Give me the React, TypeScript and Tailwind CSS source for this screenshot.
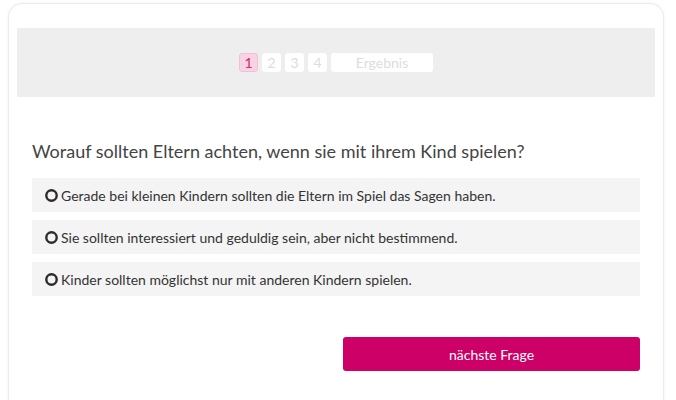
import React from "react";

const options = [
  "Gerade bei kleinen Kindern sollten die Eltern im Spiel das Sagen haben.",
  "Sie sollten interessiert und geduldig sein, aber nicht bestimmend.",
  "Kinder sollten möglichst nur mit anderen Kindern spielen.",
];

const RadioIcon = () => (
  <svg width="13" height="13" viewBox="0 0 13 13" className="shrink-0">
    <circle cx="6.5" cy="6.5" r="5.2" fill="none" stroke="#2b2b2b" strokeWidth="2.4" />
  </svg>
);

const App: React.FC = () => {
  return (
    <div className="w-[676px] h-[400px] overflow-hidden bg-white font-['Lato','Liberation_Sans',sans-serif]">
      <div className="ml-[8px] mt-[3px] w-[656px] h-[420px] rounded-[14px] border border-[#ececec] shadow-[0_0_3px_rgba(0,0,0,0.06)] bg-white pt-[24px] px-[8px]">
        <div className="h-[69px] bg-[#eeeeee] flex items-center justify-center gap-[4px]">
          <span className="w-[19px] h-[19px] rounded-[3px] bg-[#f8d3e3] border border-[#f3bfd6] text-[#d4256f] text-[14px] flex items-center justify-center">1</span>
          <span className="w-[19px] h-[19px] rounded-[3px] bg-white text-[#dcdcdc] text-[14px] flex items-center justify-center">2</span>
          <span className="w-[19px] h-[19px] rounded-[3px] bg-white text-[#dcdcdc] text-[14px] flex items-center justify-center">3</span>
          <span className="w-[19px] h-[19px] rounded-[3px] bg-white text-[#dcdcdc] text-[14px] flex items-center justify-center">4</span>
          <span className="w-[102px] h-[19px] rounded-[3px] bg-white text-[#dcdcdc] text-[14px] flex items-center justify-center">Ergebnis</span>
        </div>

        <div className="px-[15px]">
          <h2 className="mt-[42px] text-[18px] leading-[24px] text-[#444444]">
            Worauf sollten Eltern achten, wenn sie mit ihrem Kind spielen?
          </h2>

          <div className="mt-[15px] flex flex-col gap-[8px]">
            {options.map((o) => (
              <div key={o} className="h-[34px] bg-[#f4f4f4] flex items-center gap-[3px] pl-[13px] text-[14px] text-[#333333]">
                <RadioIcon />
                <span>{o}</span>
              </div>
            ))}
          </div>

          <div className="mt-[41px] flex justify-end">
            <button className="w-[297px] h-[34px] rounded-[3px] bg-[#cc0066] text-white text-[14px]">
              nächste Frage
            </button>
          </div>
        </div>
      </div>
    </div>
  );
};

export default App;
